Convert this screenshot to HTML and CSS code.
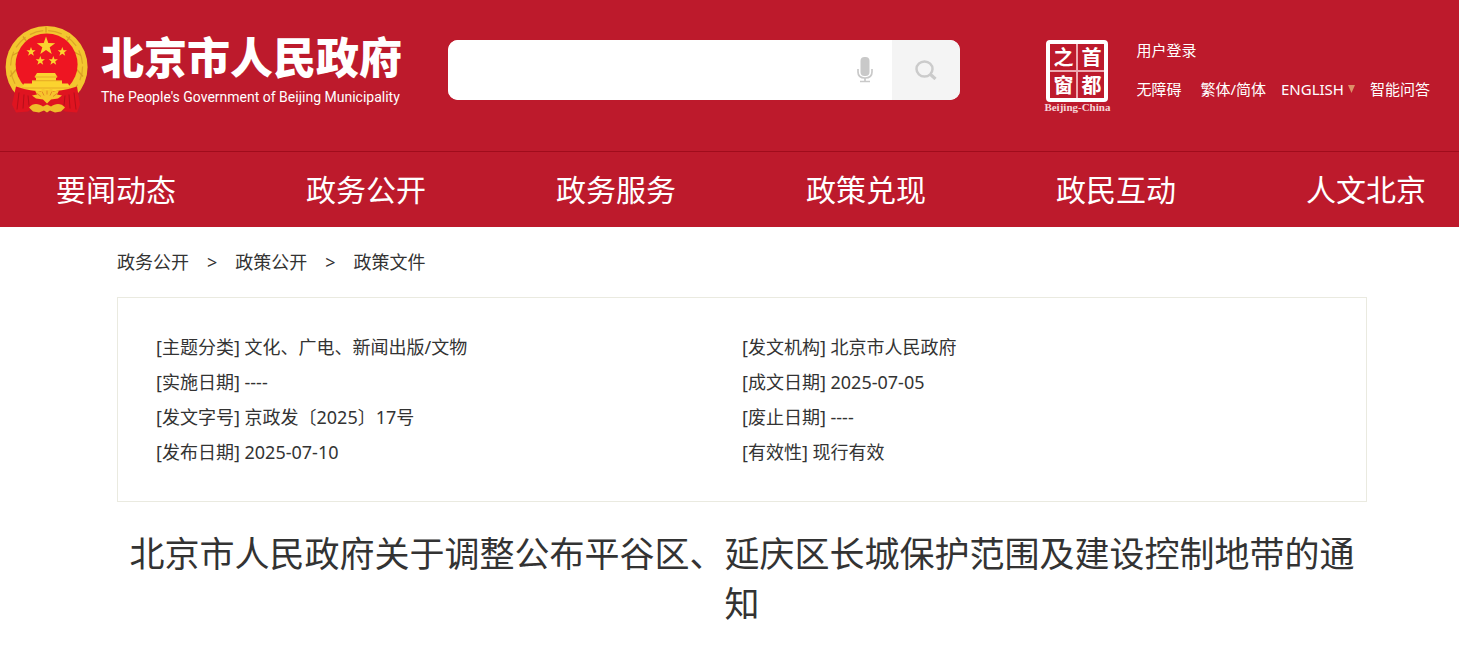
FILE: index.html
```html
<!DOCTYPE html>
<html lang="zh-CN">
<head>
    <meta charset="UTF-8">
    <meta name="viewport" content="width=device-width, initial-scale=1.0">
    <title>北京市人民政府</title>
    <link rel="stylesheet" href="styles.css">
</head>
<body>
    <header class="header">
        <div class="header-top">
            <a class="brand" href="#">
                <svg class="emblem" viewBox="0 0 84 88" aria-hidden="true">
                    <circle cx="41.6" cy="41.5" r="41" fill="#f3c62f"/>
                    <circle cx="41.6" cy="41" r="36" fill="none" stroke="#dda527" stroke-width="1.2" stroke-dasharray="14 5"/>
                    <path d="M5 51l8-9M7 30l8-4M18 11l5 7M41 1v6M65 11l-5 7M76 30l-8-4M78 51l-8-9" stroke="#d99f22" stroke-width="1.3"/>
                    <circle cx="41.6" cy="39" r="31" fill="#ee1522"/>
                    <!-- stars -->
                    <g fill="#fbd32f">
                        <path d="M41 11l2.300 6.500 6.900.2-5.500 4.100 2 6.600-5.700-3.900-5.700 3.900 2-6.600-5.500-4.100 6.900-.2z"/>
                        <path d="M26 21.500l1.200 3.200 3.400.1-2.700 2.100 1 3.300-2.900-1.900-2.900 1.900 1-3.300-2.700-2.100 3.400-.1z"/>
                        <path d="M57.300 21.500l1.200 3.200 3.400.1-2.700 2.100 1 3.300-2.900-1.900-2.900 1.900 1-3.300-2.700-2.100 3.400-.1z"/>
                        <path d="M35.300 30.500l1.200 3.200 3.400.1-2.700 2.100 1 3.300-2.900-1.900-2.900 1.900 1-3.300-2.700-2.100 3.400-.1z"/>
                        <path d="M48.300 30.500l1.200 3.200 3.400.1-2.700 2.100 1 3.300-2.900-1.900-2.900 1.900 1-3.300-2.700-2.100 3.400-.1z"/>
                        <!-- gate -->
                        <path d="M32 47.500h18l2.500 4-1.500 1v3H31v-3l-1.500-1z"/>
                        <path d="M27 55h30v4H27z"/>
                        <path d="M19 58h44l4 7-7 3H22l-7-3z"/>
                    </g>
                    <path d="M30 51.500h22M27 55.200h30M17 62.500h48" stroke="#e09a22" stroke-width=".7"/>
                    <!-- ribbons -->
                    <path d="M11 61q14 5 30 5t31-5l3 18-3 8-12-1-5-4H28l-5 4-12 1-4-8z" fill="#df1420"/>
                    <path d="M14 67l-2 17M19 69l-1 14M23 70l1 10M69 67l2 17M64 69l1 14M60 70l-1 10" stroke="#b50f1a"/>
                    <path d="M31 73l-4-3 5-1-2-4 6 1 1-3 5 2 5-2 1 3 6-1-2 4 5 1-4 3-7 1-4 4-4-4z" fill="#f7c52c"/>
                    <path d="M36 71l-4-3M39 70l-2-4M42 69v-4M45 70l2-4M48 71l4-3" stroke="#df7a20" stroke-width=".8"/>
                    <path d="M24 82c4-5 10-4 14-1l4-2 4 2c4-3 10-4 14 1l-4 4-6 1-5-2-3 2-3-2-5 2-6-1z" fill="#efbd2a"/>
                </svg>
                <span class="brand-text">
                    <strong class="brand-name">北京市人民政府</strong>
                    <span class="brand-en">The People's Government of Beijing Municipality</span>
                </span>
            </a>

            <form class="search">
                <input class="search-input" type="text" aria-label="搜索">
                <button class="search-voice" type="button" aria-label="语音">
                    <svg width="16" height="26" viewBox="0 0 16 26" fill="none" stroke="#c9c9c9">
                        <rect x="3.5" y="0" width="9" height="19" rx="4" fill="#c9c9c9" stroke="none"/>
                        <path d="M1 12v3c0 4 3 6 7 6s7-2 7-6v-3M8 21v3M3 24.500h10" stroke-width="1.7"/>
                    </svg>
                </button>
                <button class="search-submit" type="submit" aria-label="查找">
                    <svg width="22" height="20" viewBox="0 0 22 20" fill="none" stroke="#cbcbcb">
                        <ellipse cx="9.5" cy="9" rx="8" ry="7.5" stroke-width="2.5"/>
                        <path d="M15 14l5.500 5" stroke-width="3.2"/>
                    </svg>
                </button>
            </form>

            <div class="tools">
                <a class="seal" href="#">
                    <span class="seal-box">
                        <span>之</span><span>首</span>
                        <span>窗</span><span>都</span>
                    </span>
                    <span class="seal-en">Beijing-China</span>
                </a>
                <div class="links">
                    <a href="#">用户登录</a>
                    <div class="links-row">
                        <a class="wide" href="#">无障碍</a>
                        <a href="#">繁体/简体</a>
                        <button class="lang" type="button">ENGLISH
                            <svg width="7" height="8" viewBox="0 0 7 8" aria-hidden="true"><path d="M0 0h7L3.500 8z" fill="#dd8f68"/></svg>
                        </button>
                        <a href="#">智能问答</a>
                    </div>
                </div>
            </div>
        </div>

        <nav class="nav">
            <a href="#">要闻动态</a>
            <a href="#">政务公开</a>
            <a href="#">政务服务</a>
            <a href="#">政策兑现</a>
            <a href="#">政民互动</a>
            <a href="#">人文北京</a>
        </nav>
    </header>

    <main class="container">
        <div class="crumbs">
            <a href="#">政务公开</a>
            <span>&gt;</span>
            <a href="#">政策公开</a>
            <span>&gt;</span>
            <a href="#">政策文件</a>
        </div>

        <div class="doc-info">
            <ul>
                <li>[主题分类] 文化、广电、新闻出版/文物</li>
                <li>[实施日期] ----</li>
                <li>[发文字号] 京政发〔2025〕17号</li>
                <li>[发布日期] 2025-07-10</li>
            </ul>
            <ul>
                <li>[发文机构] 北京市人民政府</li>
                <li>[成文日期] 2025-07-05</li>
                <li>[废止日期] ----</li>
                <li>[有效性] 现行有效</li>
            </ul>
        </div>

        <h1>北京市人民政府关于调整公布平谷区、延庆区长城保护范围及建设控制地带的通知</h1>
    </main>
</body>
</html>
```
FILE: styles.css
```css
* {
    box-sizing: border-box;
}
body {
    margin: 0;
    background: #fff;
    color: #333;
    font-family: "Noto Sans", "Noto Sans CJK SC", sans-serif;
    font-size: 18px;
}
a {
    color: inherit;
    text-decoration: none;
}
button {
    border: none;
    padding: 0;
    background: none;
    color: inherit;
    font: inherit;
    cursor: pointer;
}
ul {
    list-style: none;
    margin: 0;
    padding: 0;
}
.header {
    background: #bd1a2c;
    color: #fff;
}
.header-top {
    display: flex;
    align-items: flex-start;
    padding: 25px 29px 37px 5px;
    border-bottom: 1px solid #a00c1c;
}
.brand {
    display: flex;
    gap: 12px;
    flex-shrink: 0;
    width: 443px;
}
.emblem {
    width: 84px;
    height: 89px;
}
.brand-text {
    display: flex;
    flex-direction: column;
    padding-top: 8px;
    white-space: nowrap;
}
.brand-name {
    font-size: 43px;
    font-weight: 900;
    line-height: 50px;
}
.brand-en {
    font-family: Roboto, sans-serif;
    font-size: 14px;
    line-height: 28px;
}

/* search */
.search {
    display: flex;
    width: 512px;
    height: 60px;
    margin-top: 15px;
    background: #fff;
    border-radius: 10px;
    overflow: hidden;
}
.search-input {
    flex: 1;
    min-width: 0;
    border: none;
    outline: none;
    padding: 0 20px;
    font: inherit;
}
.search-voice {
    width: 54px;
}
.search-submit {
    width: 68px;
    background: #f4f4f4;
}
.search svg {
    display: block;
    margin: 0 auto;
}

/* right side */
.tools {
    display: flex;
    gap: 25px;
    flex-shrink: 0;
    margin-left: auto;
    padding-top: 15px;
}
.seal {
    display: flex;
    flex-direction: column;
    align-items: center;
    width: 68px;
}
.seal-box {
    display: grid;
    grid-template-columns: 1fr 1fr;
    gap: 2px;
    width: 62px;
    height: 62px;
    border: 4px solid #fff;
    border-radius: 4px;
    background: #eda9b0;
}
.seal-box span {
    background: #bd1a2c;
    font-family: "Noto Sans CJK SC", sans-serif;
    font-size: 20px;
    font-weight: 700;
    line-height: 26px;
    text-align: center;
}
.seal-en {
    font-family: "Liberation Serif", serif;
    font-size: 11px;
    font-weight: 700;
    line-height: 10px;
    white-space: nowrap;
    color: #f6d5d8;
}
.links {
    font-size: 15px;
    line-height: 20px;
    white-space: nowrap;
}
.links-row {
    display: flex;
    gap: 15px;
    margin-top: 19px;
}
.wide {
    margin-right: 4px;
}
.lang {
    display: flex;
    align-items: center;
    gap: 4px;
}

.nav {
    display: flex;
    justify-content: space-between;
    padding: 0 33px 0 56px;
    font-size: 30px;
    line-height: 75px;
    white-space: nowrap;
}

.container {
    margin: 0 92px 0 117px;
}
.crumbs {
    display: flex;
    gap: 18px;
    line-height: 70px;
}
.doc-info {
    display: grid;
    grid-template-columns: 586px 1fr;
    padding: 32px 38px 31px;
    border: 1px solid #eaeae0;
    line-height: 35px;
}
h1 {
    margin: 27px 0;
    font-size: 35px;
    font-weight: 400;
    line-height: 50px;
    text-align: center;
}
```
